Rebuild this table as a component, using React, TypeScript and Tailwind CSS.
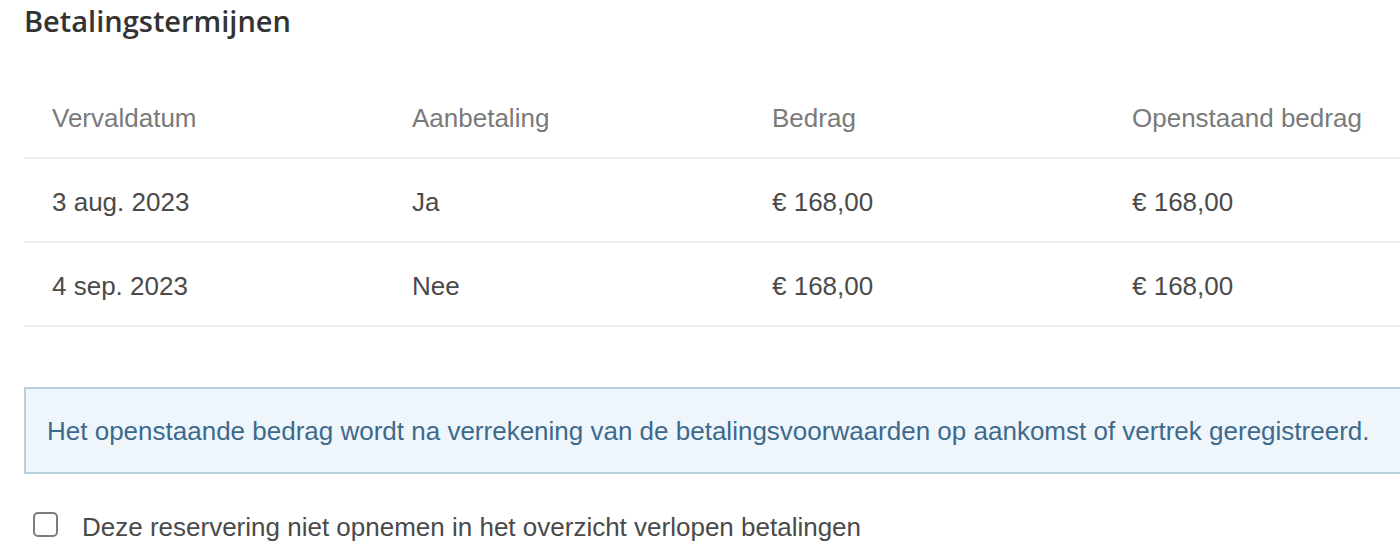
const rows = [
  { date: "3 aug. 2023", down: "Ja", amount: "€ 168,00", open: "€ 168,00" },
  { date: "4 sep. 2023", down: "Nee", amount: "€ 168,00", open: "€ 168,00" },
];

const headers = ["Vervaldatum", "Aanbetaling", "Bedrag", "Openstaand bedrag"];

export default function App() {
  return (
    <div className="w-full h-[560px] overflow-hidden bg-white font-['Liberation_Sans',Arial,sans-serif]">
      <div className="w-[1460px] pl-6">
        {/* Title */}
        <h2 className="h-[44px] pt-[2px] font-['Open_Sans',sans-serif] font-semibold text-[29px] text-[#333333] leading-[38px]">
          Betalingstermijnen
        </h2>

        {/* Table */}
        <div className="mt-[31px]">
          <div className="grid grid-cols-[360px_360px_360px_360px] h-[84px] items-center pt-[5px] border-b-2 border-[#eeeeee]">
            {headers.map((h) => (
              <div key={h} className="pl-7 text-[26px] text-[#7a7a7a]">
                {h}
              </div>
            ))}
          </div>
          {rows.map((r) => (
            <div
              key={r.date}
              className="grid grid-cols-[360px_360px_360px_360px] h-[84px] items-center pt-[4px] border-b-2 border-[#eeeeee] text-[26px] text-[#4a4a4a]"
            >
              <div className="pl-7">{r.date}</div>
              <div className="pl-7">{r.down}</div>
              <div className="pl-7">{r.amount}</div>
              <div className="pl-7">{r.open}</div>
            </div>
          ))}
        </div>

        {/* Notice */}
        <div className="mt-[60px] h-[87px] flex items-center pt-[2px] pl-[21px] bg-[#eef6fc] border-2 border-[#b9cfdd] text-[26px] text-[#3d6a8c]">
          Het openstaande bedrag wordt na verrekening van de betalingsvoorwaarden op aankomst of vertrek geregistreerd.
        </div>

        {/* Checkbox */}
        <label className="mt-[34px] flex items-center gap-[24px] pl-[9px] text-[26px] text-[#4a4a4a]">
          <span className="w-[25px] h-[25px] -mt-[6px] rounded-[5px] border-2 border-[#7d7d7d] bg-white" />
          Deze reservering niet opnemen in het overzicht verlopen betalingen
        </label>
      </div>
    </div>
  );
}
